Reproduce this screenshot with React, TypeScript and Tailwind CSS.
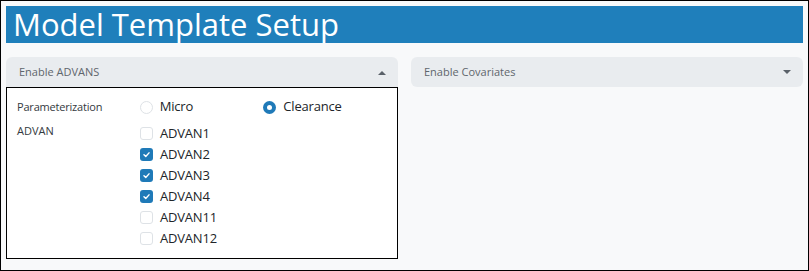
import { ChevronDown } from "lucide-react";

const advans = [
  { name: "ADVAN1", checked: false },
  { name: "ADVAN2", checked: true },
  { name: "ADVAN3", checked: true },
  { name: "ADVAN4", checked: true },
  { name: "ADVAN11", checked: false },
  { name: "ADVAN12", checked: false },
];

function Radio({ label, checked }: { label: string; checked?: boolean }) {
  return (
    <label className="flex items-center gap-[7px] w-[124px]">
      {checked ? (
        <span className="w-[13px] h-[13px] rounded-full bg-[#1f7ab8] flex items-center justify-center">
          <span className="w-[5px] h-[5px] rounded-full bg-white" />
        </span>
      ) : (
        <span className="w-[13px] h-[13px] rounded-full border border-[#dee2e6] bg-white" />
      )}
      <span className="text-[13px] tracking-[-0.2px] text-[#212529]">{label}</span>
    </label>
  );
}

function Check({ label, checked }: { label: string; checked?: boolean }) {
  return (
    <label className="flex items-center gap-[7px] h-[21px]">
      {checked ? (
        <span className="w-[13px] h-[13px] rounded-[3px] bg-[#1f7ab8] flex items-center justify-center">
          <svg width="9" height="9" viewBox="0 0 10 10" fill="none">
            <path d="M2.2 5.2 L4.2 7.1 L7.8 3.2" stroke="white" strokeWidth="1.6" strokeLinecap="round" strokeLinejoin="round" />
          </svg>
        </span>
      ) : (
        <span className="w-[13px] h-[13px] rounded-[3px] border border-[#dee2e6] bg-white" />
      )}
      <span className="text-[13px] tracking-[-0.2px] text-[#212529]">{label}</span>
    </label>
  );
}

function Caret({ up }: { up?: boolean }) {
  return (
    <svg width="8" height="5" viewBox="0 0 8 5" className="text-[#5a6169]">
      {up ? <path d="M0 5 L4 1 L8 5 Z" fill="currentColor" /> : <path d="M0 0 L4 4 L8 0 Z" fill="currentColor" />}
    </svg>
  );
}

export default function App() {
  return (
    <div
      className="w-[809px] h-[271px] border border-black bg-[#f8f9fa] p-[5px]"
      style={{ fontFamily: "'Open Sans', 'Noto Sans', sans-serif" }}
    >
      <div className="h-[37px] bg-[#1f7fbb] flex items-center px-[7px]">
        <h1 className="text-[31px] leading-none text-white">Model Template Setup</h1>
      </div>

      <div className="mt-[14px] grid grid-cols-2 gap-[13px] items-start">
        {/* ADVANS panel */}
        <div>
          <div className="h-[30px] bg-[#e9ecef] rounded-t-[6px] flex items-center justify-between pl-[13px] pr-[12px]">
            <span className="text-[11px] text-[#5f666d]">Enable ADVANS</span>
            <Caret up />
          </div>
          <div className="h-[172px] bg-white border border-black px-[10px] pt-[9px]">
            <div className="flex items-center h-[20px]">
              <span className="w-[123px] text-[11px] tracking-[-0.2px] text-[#343a40]">Parameterization</span>
              <Radio label="Micro" />
              <Radio label="Clearance" checked />
            </div>
            <div className="flex mt-[6px]">
              <span className="w-[123px] text-[11px] text-[#343a40]">ADVAN</span>
              <div className="flex flex-col">
                {advans.map((a) => (
                  <Check key={a.name} label={a.name} checked={a.checked} />
                ))}
              </div>
            </div>
          </div>
        </div>

        {/* Covariates panel */}
        <div className="h-[30px] bg-[#e9ecef] rounded-[6px] flex items-center justify-between pl-[13px] pr-[12px]">
          <span className="text-[11px] text-[#5f666d]">Enable Covariates</span>
          <Caret />
        </div>
      </div>
    </div>
  );
}
